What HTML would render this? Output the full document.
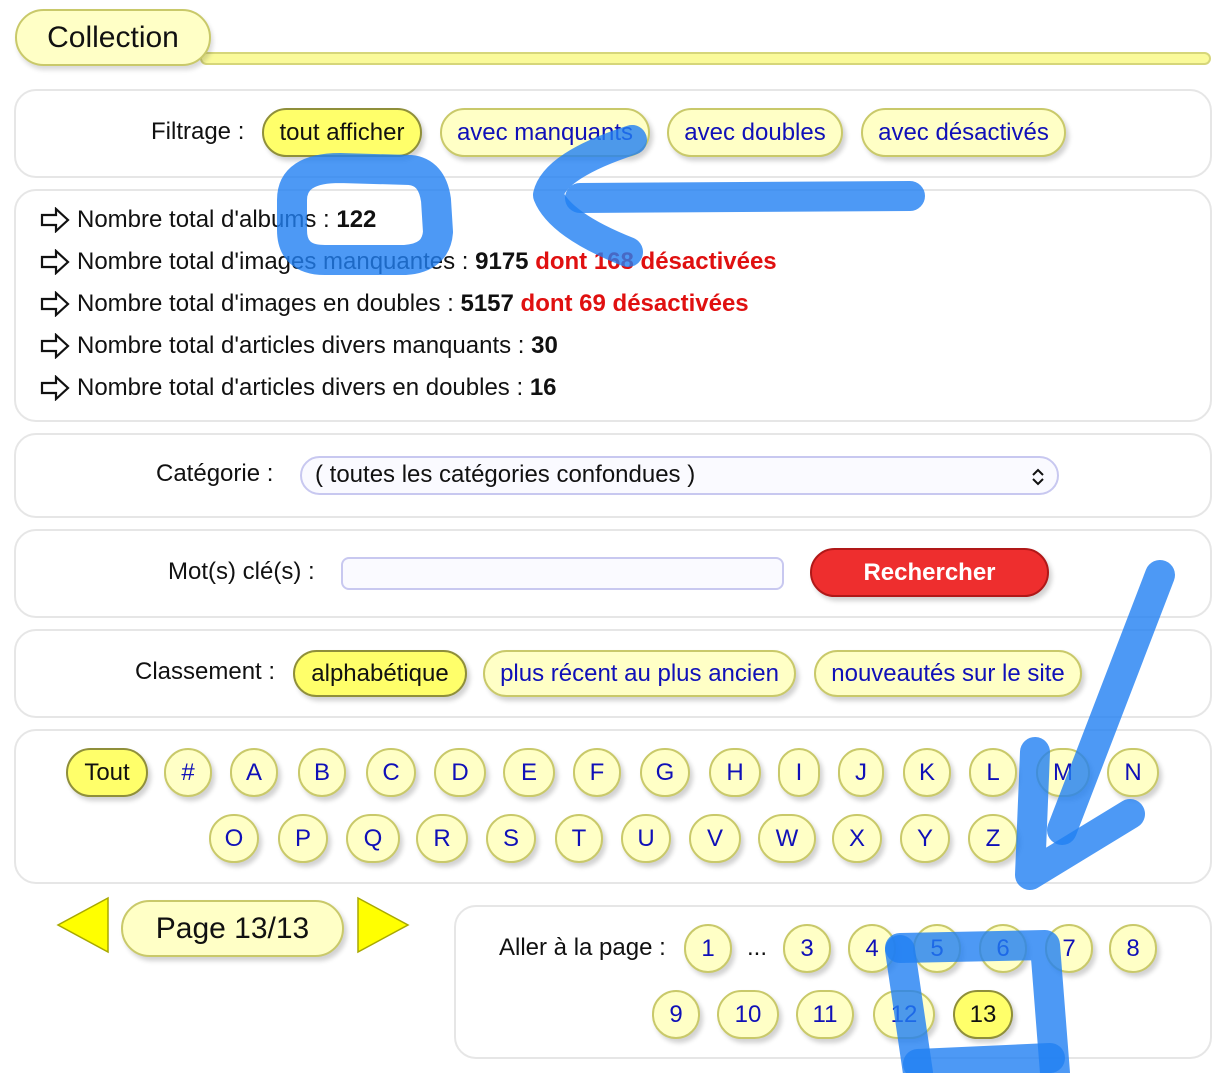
<!DOCTYPE html>
<html><head><meta charset="utf-8"><style>
*{box-sizing:border-box;margin:0;padding:0}
body{width:1231px;height:1073px;background:#fff;font-family:"Liberation Sans",sans-serif;position:relative;overflow:hidden;color:#111}
.a{position:absolute}
.box{position:absolute;left:14px;width:1198px;border:2px solid #e6e6e6;border-radius:22px;background:#fff}
.pill{position:absolute;background:#ffffc6;border:2px solid #c9c96a;border-radius:26px;color:#1010b8;font-size:24px;display:flex;align-items:center;justify-content:center;box-shadow:3px 4px 5px rgba(0,0,0,.18);white-space:nowrap}
.sel{background:#ffff6a;color:#111;border-color:#8f8f3a}
.lbl{position:absolute;font-size:24px;transform:translateY(-50%);white-space:nowrap}
.ln{position:absolute;left:40px;font-size:24px;display:flex;align-items:center;transform:translateY(-50%);white-space:nowrap}
.ln svg{margin-right:7px}
b.r{color:#e01010}
</style></head><body>
<div class="a" style="left:200px;top:52px;width:1011px;height:13px;background:#fafa9a;border:2px solid #d6d67a;border-radius:7px"></div>
<div class="pill" style="left:15px;top:9px;width:196px;height:57px;color:#111;font-size:30px;border-radius:30px;box-shadow:2px 4px 5px rgba(0,0,0,.15)">Collection</div>

<div class="box" style="top:89px;height:89px"></div>
<div class="lbl" style="left:151px;top:132px">Filtrage :</div>
<div class="pill sel" style="left:262px;top:108px;width:160px;height:49px">tout afficher</div>
<div class="pill" style="left:440px;top:108px;width:210px;height:49px">avec manquants</div>
<div class="pill" style="left:667px;top:108px;width:176px;height:49px">avec doubles</div>
<div class="pill" style="left:861px;top:108px;width:205px;height:49px">avec désactivés</div>

<div class="box" style="top:189px;height:233px"></div>
<svg width="0" height="0" style="position:absolute"><defs><symbol id="ar" viewBox="0 0 30 26"><path d="M2 8h14V2l12 11-12 11v-6H2z" fill="none" stroke="#111" stroke-width="2.2" stroke-linejoin="miter"/></symbol></defs></svg>
<div class="ln" style="top:220px"><svg width="30" height="26"><use href="#ar"/></svg>Nombre total d'albums :&nbsp;<b>122</b></div>
<div class="ln" style="top:262px"><svg width="30" height="26"><use href="#ar"/></svg>Nombre total d'images manquantes :&nbsp;<b>9175</b>&nbsp;<b class="r">dont 168 désactivées</b></div>
<div class="ln" style="top:304px"><svg width="30" height="26"><use href="#ar"/></svg>Nombre total d'images en doubles :&nbsp;<b>5157</b>&nbsp;<b class="r">dont 69 désactivées</b></div>
<div class="ln" style="top:346px"><svg width="30" height="26"><use href="#ar"/></svg>Nombre total d'articles divers manquants :&nbsp;<b>30</b></div>
<div class="ln" style="top:388px"><svg width="30" height="26"><use href="#ar"/></svg>Nombre total d'articles divers en doubles :&nbsp;<b>16</b></div>

<div class="box" style="top:433px;height:85px"></div>
<div class="lbl" style="left:156px;top:474px">Catégorie :</div>
<div class="a" style="left:300px;top:456px;width:759px;height:39px;border:2px solid #c8c8f0;border-radius:20px;background:#fafaff;font-size:24px;padding:3px 0 0 13px">( toutes les catégories confondues )
<svg class="a" style="right:12px;top:9px" width="14" height="20"><path d="M2 8l5-5 5 5M2 12l5 5 5-5" fill="none" stroke="#111" stroke-width="2"/></svg></div>

<div class="box" style="top:529px;height:89px"></div>
<div class="lbl" style="left:168px;top:572px">Mot(s) clé(s) :</div>
<div class="a" style="left:341px;top:557px;width:443px;height:33px;border:2px solid #c8c8f0;border-radius:8px;background:#fafaff"></div>
<div class="pill" style="left:810px;top:548px;width:239px;height:49px;background:#ee2e2e;border-color:#b01818;color:#fff;font-weight:bold">Rechercher</div>

<div class="box" style="top:629px;height:89px"></div>
<div class="lbl" style="left:135px;top:672px">Classement :</div>
<div class="pill sel" style="left:293px;top:650px;width:174px;height:47px">alphabétique</div>
<div class="pill" style="left:483px;top:650px;width:313px;height:47px">plus récent au plus ancien</div>
<div class="pill" style="left:814px;top:650px;width:268px;height:47px">nouveautés sur le site</div>

<div class="box" style="top:729px;height:155px"></div>
<div class="pill sel" style="left:66px;top:748px;width:82px;height:49px">Tout</div>
<div class="pill" style="left:164px;top:748px;width:48px;height:49px">#</div>
<div class="pill" style="left:230px;top:748px;width:48px;height:49px">A</div>
<div class="pill" style="left:298px;top:748px;width:48px;height:49px">B</div>
<div class="pill" style="left:366px;top:748px;width:50px;height:49px">C</div>
<div class="pill" style="left:434px;top:748px;width:52px;height:49px">D</div>
<div class="pill" style="left:503px;top:748px;width:52px;height:49px">E</div>
<div class="pill" style="left:573px;top:748px;width:48px;height:49px">F</div>
<div class="pill" style="left:640px;top:748px;width:50px;height:49px">G</div>
<div class="pill" style="left:709px;top:748px;width:52px;height:49px">H</div>
<div class="pill" style="left:778px;top:748px;width:42px;height:49px">I</div>
<div class="pill" style="left:838px;top:748px;width:46px;height:49px">J</div>
<div class="pill" style="left:903px;top:748px;width:48px;height:49px">K</div>
<div class="pill" style="left:969px;top:748px;width:48px;height:49px">L</div>
<div class="pill" style="left:1036px;top:748px;width:54px;height:49px">M</div>
<div class="pill" style="left:1107px;top:748px;width:52px;height:49px">N</div>
<div class="pill" style="left:209px;top:814px;width:50px;height:49px">O</div>
<div class="pill" style="left:278px;top:814px;width:50px;height:49px">P</div>
<div class="pill" style="left:346px;top:814px;width:54px;height:49px">Q</div>
<div class="pill" style="left:416px;top:814px;width:52px;height:49px">R</div>
<div class="pill" style="left:486px;top:814px;width:50px;height:49px">S</div>
<div class="pill" style="left:555px;top:814px;width:48px;height:49px">T</div>
<div class="pill" style="left:621px;top:814px;width:50px;height:49px">U</div>
<div class="pill" style="left:689px;top:814px;width:52px;height:49px">V</div>
<div class="pill" style="left:758px;top:814px;width:58px;height:49px">W</div>
<div class="pill" style="left:832px;top:814px;width:50px;height:49px">X</div>
<div class="pill" style="left:900px;top:814px;width:50px;height:49px">Y</div>
<div class="pill" style="left:968px;top:814px;width:50px;height:49px">Z</div>

<svg class="a" style="left:55px;top:896px" width="360" height="60"><path d="M53 2L3 29l50 27z" fill="#ffff00" stroke="#a8a800" stroke-width="1.5"/><path d="M303 2l50 27-50 27z" fill="#ffff00" stroke="#a8a800" stroke-width="1.5"/></svg>
<div class="pill" style="left:121px;top:900px;width:223px;height:57px;color:#111;font-size:30px;border-radius:30px">Page 13/13</div>

<div class="box" style="left:454px;width:758px;top:905px;height:154px"></div>
<div class="lbl" style="left:499px;top:948px">Aller à la page :</div>
<div class="lbl" style="left:747px;top:948px">...</div>
<div class="pill" style="left:684px;top:924px;width:48px;height:49px">1</div>
<div class="pill" style="left:783px;top:924px;width:48px;height:49px">3</div>
<div class="pill" style="left:848px;top:924px;width:48px;height:49px">4</div>
<div class="pill" style="left:913px;top:924px;width:48px;height:49px">5</div>
<div class="pill" style="left:979px;top:924px;width:48px;height:49px">6</div>
<div class="pill" style="left:1045px;top:924px;width:48px;height:49px">7</div>
<div class="pill" style="left:1109px;top:924px;width:48px;height:49px">8</div>
<div class="pill" style="left:652px;top:990px;width:48px;height:49px">9</div>
<div class="pill" style="left:717px;top:990px;width:62px;height:49px">10</div>
<div class="pill" style="left:796px;top:990px;width:58px;height:49px">11</div>
<div class="pill" style="left:873px;top:990px;width:62px;height:49px">12</div>
<div class="pill sel" style="left:953px;top:990px;width:60px;height:49px">13</div>

<svg class="a" style="left:0;top:0" width="1231" height="1073">
<g fill="none" stroke="#2080f2" stroke-opacity=".8" stroke-linecap="round" stroke-linejoin="round" stroke-width="30">
<path d="M292 200Q292 168 340 168L410 170Q432 172 436 200L438 232Q436 258 405 260L325 260Q292 260 292 230Z"/>
<path d="M910 196L580 198"/>
<path d="M632 140Q555 165 548 195Q560 225 628 252"/>
<path d="M1160 575L1062 830"/>
<path d="M1035 752L1030 875L1130 814"/>
<path d="M900 948L1045 945L1055 1073"/>
<path d="M900 950L918 1073"/>
<path d="M918 1064L1050 1058"/>
</g></svg>
</body></html>
